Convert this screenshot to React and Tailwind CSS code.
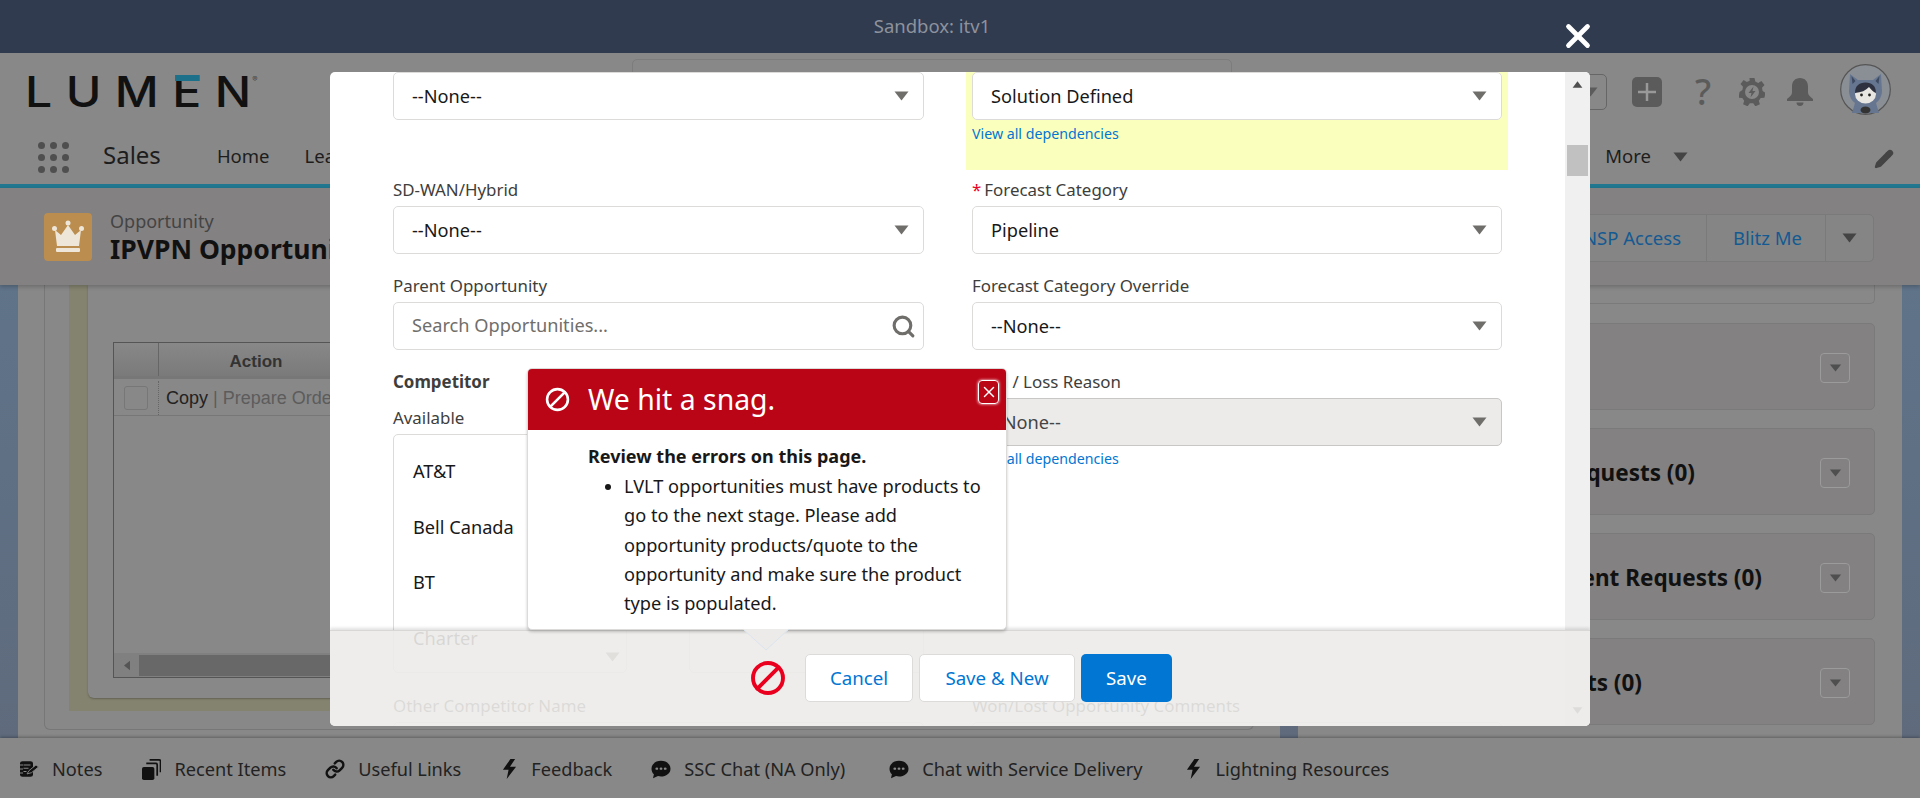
import React from 'react';
import { Ban, Search, X, Pencil, Link } from 'lucide-react';

const font = { fontFamily: '"Noto Sans", sans-serif' };

function Caret({ className = 'fill-[#706e6b]', w = 15, h = 10 }) {
	return (
		<svg width={w} height={h} viewBox="0 0 15 10" className={className}>
			<path d="M0.5 0.5h14L7.5 9.5z" />
		</svg>
	);
}

function Bolt() {
	return (
		<svg width="15" height="20" viewBox="0 0 16 26" preserveAspectRatio="none">
			<path d="M9 0L1 14h6l-2 12 10-16H8.500L14 0z" fill="#111" />
		</svg>
	);
}

function ChatIcon() {
	return (
		<svg width="20" height="19" viewBox="0 0 20 22" preserveAspectRatio="none">
			<path d="M10 1c5.200 0 9.500 3.700 9.500 9s-4.300 9-9.500 9c-1 0-2-.2-3-.4L2 21l.9-4.600C1.300 14.800.5 12.600.5 10 .5 4.700 4.800 1 10 1z" fill="#111" />
			<circle cx="5.800" cy="10" r="1.400" fill="#888" />
			<circle cx="10" cy="10" r="1.400" fill="#888" />
			<circle cx="14.200" cy="10" r="1.400" fill="#888" />
		</svg>
	);
}

function NotesIcon() {
	return (
		<svg width="20" height="18" viewBox="0 0 20 22" preserveAspectRatio="none">
			<rect x="1" y="1.500" width="13" height="19" rx="2.500" fill="#111" />
			<path d="M0 6h4M0 11h4M0 16h4M4.500 6h7M4.500 10h5M4.500 14h3" stroke="#888" strokeWidth="1.300" />
			<path d="M8 17l2-4 7-7 2.500 2.500-7 7z" fill="#111" stroke="#888" strokeWidth="1" />
		</svg>
	);
}

function RecentIcon() {
	return (
		<svg width="19" height="21" viewBox="0 0 20 24" preserveAspectRatio="none">
			<path d="M8 1h10a1.500 1.500 0 0 1 1.500 1.500V15" fill="none" stroke="#111" strokeWidth="1.800" />
			<path d="M4.500 5h10A1.500 1.500 0 0 1 16 6.500V19" fill="none" stroke="#111" strokeWidth="1.800" />
			<rect x="0" y="9" width="13" height="15" rx="2" fill="#111" />
		</svg>
	);
}

function Crown() {
	return (
		<svg width="32" height="34" viewBox="0 0 32 34">
			<path d="M3 10l6 5 7-10 7 10 6-5-2 16H5z" fill="#eee6d8" />
			<circle cx="2.500" cy="8.500" r="2.500" fill="#eee6d8" />
			<circle cx="16" cy="3" r="2.500" fill="#eee6d8" />
			<circle cx="29.500" cy="8.500" r="2.500" fill="#eee6d8" />
			<rect x="4" y="28" width="24" height="4" rx="1" fill="#eee6d8" />
		</svg>
	);
}

function Gear() {
	return (
		<svg width="26" height="28" viewBox="0 0 26 28">
			<path d="M10.500 0h5l.8 3.600 2.900 1.300 3.200-1.900 3.100 3.900-2.500 2.800.6 3.300 2.900 1.900-1.100 4.800-3.700.3-1.900 2.700 1.100 3.500-4.500 2.100-2.200-3-3.400 0-2.200 3-4.500-2.100 1.100-3.500-1.900-2.700-3.700-.3L.5 14l2.900-1.900.6-3.300L1.500 6l3.100-3.900L7.800 4l2.900-1.300z" fill="#5b5b5b" />
			<circle cx="13" cy="14" r="7" fill="#888" />
			<path d="M14.500 8.500L9.500 15h3l-1 4.500 5-6.500h-3z" fill="#5b5b5b" />
		</svg>
	);
}

function Bell() {
	return (
		<svg width="28" height="28" viewBox="0 0 28 28">
			<path d="M14 0c5 0 8 3.500 8 8.500v6c0 2.500 2 4 5 6.500v2H1v-2c3-2.500 5-4 5-6.500v-6C6 3.500 9 0 14 0z" fill="#5b5b5b" />
			<path d="M10.500 24.500h7a3.500 3.500 0 0 1-7 0z" fill="#5b5b5b" />
		</svg>
	);
}

function Avatar() {
	return (
		<svg width="51" height="51" viewBox="0 0 51 51">
			<circle cx="25.500" cy="25.500" r="24.800" fill="#8a8f96" stroke="#555" strokeWidth="1.200" />
			<path d="M10 10l8 6h15l8-6 1 17c0 5-3 10-6 12l3 10H12l3-10c-3-2-6-7-6-12z" fill="#667690" />
			<path d="M11.500 12l4 5-3 3zM39.500 12l-4 5 3 3z" fill="#3d4a60" />
			<ellipse cx="25.500" cy="30" rx="10.500" ry="9.500" fill="#e8e6e2" />
			<path d="M15 29c0-7 4-10.500 10.500-10.500S36 22 36 29c-3-1-5-3.500-7-6-3 3.500-8 5.500-14 6z" fill="#2e3140" />
			<circle cx="21.500" cy="31" r="1.400" fill="#222" />
			<circle cx="29.500" cy="31" r="1.400" fill="#222" />
			<ellipse cx="25.500" cy="46" rx="5" ry="3.500" fill="#333" />
		</svg>
	);
}

function Logo() {
	return (
		<div className="relative -ml-[3px] origin-left scale-x-[1.12] text-[43px] leading-none font-medium tracking-[12px] text-[#111] flex" style={{ fontFamily: 'Inter, sans-serif' }}>
			<span>LUM</span>
			<span className="relative">
				E
				<span className="absolute left-[3px] right-[13px] top-[5px] h-[6px] bg-[#1c7089]" />
			</span>
			<span className="tracking-normal">N</span>
			<span className="text-[7px] leading-none mt-[6px] ml-[1px] tracking-normal font-normal text-[#444]">®</span>
		</div>
	);
}

function Select({ value, disabled }) {
	return (
		<div className={`h-12 border rounded-[5px] flex items-center justify-between pl-[18px] pr-[14px] ${disabled ? 'bg-[#ecebea] border-[#c9c7c5] text-[#444]' : 'bg-white border-[#dddbda] text-[#181818]'}`}>
			<span className="pt-[1px]">{value}</span>
			<Caret />
		</div>
	);
}

function Label({ children, required }) {
	return (
		<div className="h-6 mb-1 leading-6 text-[16.900px] text-[#3e3e3c]">
			{required && <span className="text-[#ea001e] mr-[3px]">*</span>}
			{children}
		</div>
	);
}

function Dependencies() {
	return <a className="block text-[14.200px] leading-[18px] text-[#0176d3]">View all dependencies</a>;
}

function Modal() {
	return (
		<div className="absolute z-20 left-[330px] top-[72px] w-[1260px] h-[654px] bg-white rounded-[5px] overflow-hidden flex text-[18.200px]" style={font}>
			<div className="flex-1 pl-[63px] pr-[63px] overflow-hidden">
				<div className="grid grid-cols-[531px_530px] gap-x-[48px]">
					<div>
						<div className="h-[98px] mb-2">
							<Select value="--None--" />
						</div>
						<div className="mb-5">
							<Label>SD-WAN/Hybrid</Label>
							<Select value="--None--" />
						</div>
						<div className="mb-5">
							<Label>Parent Opportunity</Label>
							<div className="h-12 border border-[#dddbda] rounded-[5px] flex items-center justify-between pl-[18px] pr-[7px] text-[#706e6b]">
								<span>Search Opportunities...</span>
								<Search size={25} strokeWidth={3} className="text-[#706e6b]" />
							</div>
						</div>
						<div className="h-6 leading-6 font-bold text-[16.900px] text-[#3e3e3c] mb-3">Competitor</div>
						<Label>Available</Label>
						<div className="flex justify-between h-[239px]">
							<div className="relative w-[234px] border border-[#dddbda] rounded-[5px] pl-[19px] pt-[24px] text-[#181818]">
								<div className="h-[55.600px] leading-6">AT&amp;T</div>
								<div className="h-[55.600px] leading-6">Bell Canada</div>
								<div className="h-[55.600px] leading-6">BT</div>
								<div className="h-[55.600px] leading-6">Charter</div>
								<div className="absolute right-[6px] bottom-[10px]">
									<Caret />
								</div>
							</div>
							<div className="w-[235px] border border-[#dddbda] rounded-[5px]" />
						</div>
						<div className="mt-[21px]">
							<Label>Other Competitor Name</Label>
							<div className="h-12 border border-[#dddbda] rounded-[5px]" />
						</div>
					</div>
					<div>
						<div className="h-[98px] mb-2 -mx-1.5 px-1.5 bg-[#fbffbd]">
							<Select value="Solution Defined" />
							<div className="mt-[5px]">
								<Dependencies />
							</div>
						</div>
						<div className="mb-5">
							<Label required>Forecast Category</Label>
							<Select value="Pipeline" />
						</div>
						<div className="mb-5">
							<Label>Forecast Category Override</Label>
							<Select value="--None--" />
						</div>
						<Label>Won / Loss Reason</Label>
						<Select value="--None--" disabled />
						<div className="mt-1">
							<Dependencies />
						</div>
						<div className="mt-[226px]">
							<Label>Won/Lost Opportunity Comments</Label>
							<div className="h-12 border border-[#dddbda] rounded-[5px]" />
						</div>
					</div>
				</div>
			</div>
			<div className="w-[25px] shrink-0 bg-[#f0f0f0] flex flex-col items-center">
				<Caret className="fill-[#505050] rotate-180 mt-[9px]" w={11} h={7} />
				<div className="w-[21px] h-[31px] bg-[#c1c1c1] mt-[57px]" />
				<div className="mt-auto mb-[12px]">
					<Caret className="fill-[#505050]" w={11} h={7} />
				</div>
			</div>

			{/* docked footer, the form shows faintly through it */}
			<div className="absolute left-0 right-0 bottom-0 h-[96px] bg-[#ecebe9]/90 border-t border-[#d8d7d5] shadow-[0_-2px_3px_rgba(0,0,0,0.12)] flex justify-center pl-[2px] pt-[23px] text-[18.700px]">
				<Ban size={36} strokeWidth={2.600} className="text-[#ea001e] mr-[19px] mt-[6px] -scale-x-100" />
				<button className="w-[108px] h-[48px] bg-white border border-[#dddbda] rounded-[5px] text-[#0176d3]">Cancel</button>
				<button className="w-[156px] h-[48px] ml-[6px] bg-white border border-[#dddbda] rounded-[5px] text-[#0176d3]">Save &amp; New</button>
				<button className="w-[91px] h-[48px] ml-[6px] bg-[#0176d3] rounded-[5px] text-white">Save</button>
			</div>

			{/* error popover */}
			<div className="absolute left-[197px] top-[296px] w-[480px] h-[262px] bg-white rounded-[5px] border border-[#dddbda] shadow-[0_2px_3px_rgba(0,0,0,0.2)]">
				<div className="h-[61px] bg-[#ba0517] rounded-t-[4px] flex items-center pl-[17px] text-white relative">
					<Ban size={25} strokeWidth={2.500} className="-scale-x-100" />
					<span className="ml-[18px] text-[28.400px] leading-none">We hit a snag.</span>
					<div className="absolute right-[7px] top-[11px] w-[21px] h-[24px] border border-white rounded-[4px] flex items-center justify-center shadow-[0_0_3px_#fff]">
						<X size={18} strokeWidth={2} />
					</div>
				</div>
				<div className="pl-[60px] pr-[20px] pt-[13px] text-[#181818]">
					<div className="font-bold leading-[26px] text-[18px]">Review the errors on this page.</div>
					<ul className="list-disc pl-[36px] leading-[29.300px] mt-[3px]">
						<li>LVLT opportunities must have products to go to the next stage. Please add opportunity products/quote to the opportunity and make sure the product type is populated.</li>
					</ul>
				</div>
				<svg width="48" height="24" viewBox="0 0 48 24" className="absolute left-[214px] top-[259px]">
					<path d="M1 1l23 21L47 1" fill="#ecebe9" stroke="#dbe4ee" strokeWidth="1" />
					<path d="M2 0h44v1H2z" fill="#fff" />
				</svg>
			</div>
		</div>
	);
}

function SideCard({ text, gap }) {
	return (
		<div className="h-[87px] mb-[18px] pt-[3px] border border-[#7a7a7a] rounded-[5px] bg-[#838181] flex items-center justify-end pr-[24px]">
			{text && <span className="font-bold text-[22.500px] text-[#111]" style={{ marginRight: gap }}>{text}</span>}
			<div className="w-[30px] h-[30px] border border-[#9b9b9b] rounded-[4px] flex items-center justify-center">
				<Caret className="fill-[#4f4f4f]" w={13} h={8} />
			</div>
		</div>
	);
}

function FooterItem({ icon, label, iconWidth, mr }) {
	return (
		<div className="flex items-center" style={{ marginRight: mr }}>
			<div className="flex justify-center" style={{ width: iconWidth }}>{icon}</div>
			<span className="ml-[13px]">{label}</span>
		</div>
	);
}

export default function App() {
	return (
		<div className="relative w-[1920px] h-[798px] overflow-hidden bg-[#888888] flex flex-col" style={font}>
			<div className="h-[53px] shrink-0 bg-[#303b50] flex items-center justify-center text-[#8d929c] text-[18.500px] pb-[1px] pr-[56px]">
				Sandbox: itv1
			</div>

			<div className="h-[77px] shrink-0 flex items-center pl-[28px] pr-[29px]">
				<div className="w-[233px] shrink-0">
					<Logo />
				</div>
				<div className="w-[600px] h-[40px] ml-[371px] -mt-[25px] border border-[#7c7c7c] rounded-[5px] shrink-0" />
				<div className="w-[107px] h-[36px] ml-[268px] border border-[#666] rounded-[5px] flex items-center justify-end pr-[8px] shrink-0">
					<Caret className="fill-[#5b5b5b]" />
				</div>
				<div className="ml-[25px] w-[30px] h-[30px] rounded-[5px] bg-[#5b5b5b] flex items-center justify-center shrink-0">
					<svg width="20" height="20" viewBox="0 0 20 20"><path d="M10 1v18M1 10h18" stroke="#999" strokeWidth="2.500" /></svg>
				</div>
				<span className="ml-[33px] w-[22px] text-[36px] leading-none font-medium text-[#5b5b5b]">?</span>
				<div className="ml-[22px] flex"><Gear /></div>
				<div className="ml-[21px] flex"><Bell /></div>
				<div className="ml-[26px] -mt-[5px] flex"><Avatar /></div>
			</div>

			<div className="h-[54px] shrink-0 flex items-center pl-[38px] pr-[26px] text-[18.500px] text-[#1d1d1d]">
				<div className="grid grid-cols-3 gap-[5px] w-[31px]">
					{[0, 1, 2, 3, 4, 5, 6, 7, 8].map((i) => (
						<span key={i} className="w-[7px] h-[7px] rounded-full bg-[#4f4f4f]" />
					))}
				</div>
				<span className="ml-[34px] text-[24px] -mt-[5px]">Sales</span>
				<span className="ml-[56px] -mt-[2px]">Home</span>
				<span className="ml-[35px] -mt-[2px]">Leads</span>
				<span className="ml-auto mr-[22px] -mt-[2px]">More</span>
				<Caret className="fill-[#444]" />
				<Pencil size={20} className="ml-[186px] mt-[3px] fill-[#444] text-[#444]" />
			</div>
			<div className="h-1 shrink-0 bg-[#20778f]" />

			<div className="h-[97px] shrink-0 bg-[#838181] shadow-[0_2px_4px_rgba(0,0,0,0.2)] relative z-10 flex items-center pl-[44px] pr-[46px]">
				<div className="w-[48px] h-[48px] rounded-[4px] bg-[#bb8d4e] flex items-center justify-center">
					<Crown />
				</div>
				<div className="ml-[18px]">
					<div className="text-[18px] leading-[24px] mt-[1px] text-[#444]">Opportunity</div>
					<div className="text-[26.500px] leading-[32px] font-bold text-[#111]">IPVPN Opportunity</div>
				</div>
				<div className="ml-auto mt-[3px] h-[48px] flex items-center border border-[#7a7a7a] rounded-[5px] bg-[#868585] text-[#135a92] text-[18.500px]">
					<div className="h-full flex items-center w-[300px] justify-end pr-[25px] border-r border-[#7a7a7a]">NSP Access</div>
					<div className="h-full flex items-center w-[119px] justify-center pl-[3px] border-r border-[#7a7a7a]">Blitz Me</div>
					<div className="h-full flex items-center w-[47px] justify-center"><Caret className="fill-[#444]" /></div>
				</div>
			</div>

			<div className="flex-1 min-h-0 flex bg-gradient-to-b from-[#5f7389] to-[#5f6b7d]">
				<div className="ml-[18px] w-[1262px] bg-[#888888] px-[26px] pb-[8px] flex">
					<div className="flex-1 border border-[#777] border-t-0 rounded-b-[6px] pl-[24px] pb-[18px] flex">
						<div className="flex-1 bg-[#84836f] pl-[19px] pb-[13px] flex">
							<div className="flex-1 bg-[#888888] rounded-bl-[6px] shadow-[0_1px_2px_rgba(0,0,0,0.25)] pl-[25px] pt-[57px] pb-[20px] flex">
								<div className="flex-1 border border-[#555] flex flex-col" style={{ fontFamily: '"Liberation Sans", sans-serif' }}>
									<div className="h-[36px] pt-[4px] flex bg-gradient-to-b from-[#888] to-[#7a7a7a] border-b-[3px] border-[#777]">
										<div className="w-[45px] -mt-[4px] border-r border-[#666]" />
										<div className="w-[194px] flex items-center justify-center font-bold text-[17px] text-[#333]">Action</div>
									</div>
									<div className="h-[37px] pt-[2px] flex items-center border-b border-[#777] text-[18px]">
										<div className="w-[45px] h-full flex items-center justify-center border-r border-dotted border-[#666]">
											<div className="w-[24px] h-[24px] border border-[#777] rounded-[3px]" />
										</div>
										<span className="ml-[7px] text-[#222]">Copy</span>
										<span className="ml-[5px] text-[#5c5c5c]">| Prepare Order</span>
									</div>
									<div className="mt-auto h-[24px] bg-[#808080] flex items-center">
										<div className="w-[25px] flex justify-center"><Caret className="fill-[#555] rotate-90" w={10} h={7} /></div>
										<div className="flex-1 h-[21px] bg-[#686868]" />
									</div>
								</div>
							</div>
						</div>
					</div>
				</div>
				<div className="ml-[18px] w-[604px] bg-[#888888] pl-[24px] pr-[27px]">
					<div className="h-[19px] border border-t-0 border-[#7a7a7a] rounded-b-[5px] mb-[19px]" />
					<SideCard />
					<SideCard text="Service Requests (0)" gap={125} />
					<SideCard text="Enablement Requests (0)" gap={58} />
					<SideCard text="Contracts (0)" gap={178} />
				</div>
			</div>

			<div className="h-[60px] shrink-0 pt-[3px] bg-[#888888] shadow-[0_-1px_3px_rgba(0,0,0,0.3)] relative z-10 flex items-center pl-[19px] text-[18.200px] text-[#222]">
				<FooterItem icon={<NotesIcon />} label="Notes" iconWidth={20} mr={40} />
				<FooterItem icon={<RecentIcon />} label="Recent Items" iconWidth={19} mr={39} />
				<FooterItem icon={<Link size={20} strokeWidth={3} className="text-[#111]" />} label="Useful Links" iconWidth={20} mr={39} />
				<FooterItem icon={<Bolt />} label="Feedback" iconWidth={18} mr={38} />
				<FooterItem icon={<ChatIcon />} label="SSC Chat (NA Only)" iconWidth={21} mr={44} />
				<FooterItem icon={<ChatIcon />} label="Chat with Service Delivery" iconWidth={20} mr={42} />
				<FooterItem icon={<Bolt />} label="Lightning Resources" iconWidth={18} mr={0} />
			</div>

			<Modal />
			<X size={38} strokeWidth={3} className="absolute z-30 left-[1559px] top-[17px] text-white" />
		</div>
	);
}
